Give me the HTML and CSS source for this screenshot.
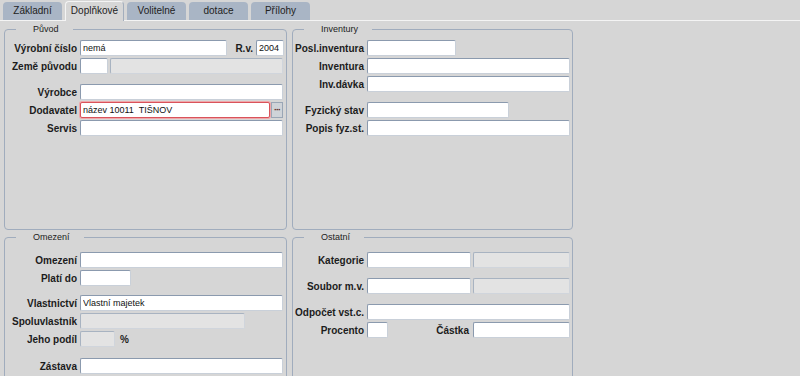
FILE: index.html
```html
<!DOCTYPE html>
<html lang="cs">
<head>
    <meta charset="UTF-8">
    <title>Doplňkové</title>
    <link rel="stylesheet" href="styles.css">
</head>
<body>
    <div class="tabbar">
        <div class="tab">Základní</div>
        <div class="tab active">Doplňkové</div>
        <div class="tab">Volitelné</div>
        <div class="tab">dotace</div>
        <div class="tab">Přílohy</div>
    </div>

    <div class="panels">
        <!-- Původ -->
        <fieldset class="box top left">
            <legend>Původ</legend>
            <div class="row">
                <label class="lbl">Výrobní číslo</label>
                <input class="fld w147" value="nemá">
                <label class="lbl-inline push">R.v.</label>
                <input class="fld w28" value="2004">
            </div>
            <div class="row">
                <label class="lbl">Země původu</label>
                <input class="fld w28">
                <input class="fld off w173" disabled>
            </div>
            <div class="spacer"></div>
            <div class="row">
                <label class="lbl">Výrobce</label>
                <input class="fld full">
            </div>
            <div class="row">
                <label class="lbl">Dodavatel</label>
                <input class="fld w190 invalid" value="název 10011  TIŠNOV">
                <button class="pick">···</button>
            </div>
            <div class="row">
                <label class="lbl">Servis</label>
                <input class="fld full">
            </div>
        </fieldset>

        <!-- Inventury -->
        <fieldset class="box top right">
            <legend>Inventury</legend>
            <div class="row">
                <label class="lbl">Posl.inventura</label>
                <input class="fld w89">
            </div>
            <div class="row">
                <label class="lbl">Inventura</label>
                <input class="fld full">
            </div>
            <div class="row">
                <label class="lbl">Inv.dávka</label>
                <input class="fld full">
            </div>
            <div class="spacer"></div>
            <div class="row">
                <label class="lbl">Fyzický stav</label>
                <input class="fld w142">
            </div>
            <div class="row">
                <label class="lbl">Popis fyz.st.</label>
                <input class="fld full">
            </div>
        </fieldset>

        <!-- Omezení -->
        <fieldset class="box bottom left">
            <legend>Omezení</legend>
            <div class="row">
                <label class="lbl">Omezení</label>
                <input class="fld full">
            </div>
            <div class="row">
                <label class="lbl">Platí do</label>
                <input class="fld w51">
            </div>
            <div class="spacer s7"></div>
            <div class="row">
                <label class="lbl">Vlastnictví</label>
                <input class="fld full" value="Vlastní majetek">
            </div>
            <div class="row">
                <label class="lbl">Spoluvlastník</label>
                <input class="fld off w165" disabled>
            </div>
            <div class="row">
                <label class="lbl">Jeho podíl</label>
                <input class="fld off w35" disabled>
                <span class="unit">%</span>
            </div>
            <div class="spacer s9"></div>
            <div class="row">
                <label class="lbl">Zástava</label>
                <input class="fld full">
            </div>
        </fieldset>

        <!-- Ostatní -->
        <fieldset class="box bottom right">
            <legend>Ostatní</legend>
            <div class="row">
                <label class="lbl">Kategorie</label>
                <input class="fld w104">
                <input class="fld off w97" disabled>
            </div>
            <div class="spacer"></div>
            <div class="row">
                <label class="lbl">Soubor m.v.</label>
                <input class="fld w104">
                <input class="fld off w97" disabled>
            </div>
            <div class="spacer"></div>
            <div class="row">
                <label class="lbl">Odpočet vst.c.</label>
                <input class="fld full">
            </div>
            <div class="row">
                <label class="lbl">Procento</label>
                <input class="fld w21">
                <label class="lbl-inline push">Částka</label>
                <input class="fld w97">
            </div>
        </fieldset>
    </div>
</body>
</html>
```

FILE: styles.css
```css
body {
    margin: 0;
    background: #d6d6d6;
    font-family: "Liberation Sans", Arial, sans-serif;
    color: #1c1c1c;
    overflow: hidden;
}
.tabbar {
    display: flex;
    align-items: flex-end;
    gap: 3px;
    height: 20px;
    padding-left: 3px;
    border-bottom: 1px solid #f4f4f4;
}
.tab {
    box-sizing: border-box;
    width: 59px;
    height: 18px;
    background: #a9b5c5;
    border-radius: 4px 4px 0 0;
    text-align: center;
    font-size: 10px;
    line-height: 18px;
    color: #222;
}
.tab.active {
    height: 20px;
    margin-bottom: -1px;
    background: #d6d6d6;
    border: 1px solid #f4f4f4;
    border-right-color: #a3aebd;
    border-bottom: none;
    line-height: 17px;
}
.panels {
    display: grid;
    grid-template-columns: 283px 281px;
    grid-template-rows: 207px 160px;
    column-gap: 5px;
    row-gap: 1px;
    padding: 2px 0 0 4px;
}
.box {
    margin: 0;
    padding: 5px 2px 0 0;
    border: 1px solid #a0acbd;
    border-radius: 4px;
    min-width: 0;
}
.box.bottom {
    padding-top: 9px;
}
.box legend {
    margin-left: 11px;
    padding: 0 14px 0 17px;
    font-size: 9px;
    line-height: 12px;
    color: #222;
}
.row {
    display: flex;
    align-items: center;
    height: 16px;
    margin-bottom: 2px;
}
.spacer {
    height: 8px;
}
.spacer.s7 {
    height: 7px;
}
.spacer.s9 {
    height: 9px;
}
.lbl {
    flex: none;
    width: 72px;
    margin-right: 3px;
    text-align: right;
    font-weight: bold;
    font-size: 10px;
    white-space: nowrap;
}
.box.right .lbl {
    width: 71px;
}
.lbl-inline {
    font-weight: bold;
    font-size: 10px;
    margin-right: 3px;
}
.push {
    margin-left: auto;
}
.box.right .lbl-inline {
    margin-right: 4px;
}
.fld {
    box-sizing: border-box;
    flex: none;
    height: 16px;
    margin: 0 2px 0 0;
    padding: 0 2px;
    background: #fff;
    border: 1px solid;
    border-color: #8b9aae #c9d0d9 #c9d0d9 #8b9aae;
    border-radius: 2px;
    font-family: "Liberation Sans", Arial, sans-serif;
    font-size: 9px;
    color: #111;
    outline: none;
}
.fld.off {
    background: #e3e3e3;
    border-color: #a8b3c1 #d0d5dc #d0d5dc #a8b3c1;
}
.fld.invalid {
    border: 1px solid #d9535a;
    box-shadow: 0 0 0 1px #f0a7aa;
    margin-right: 1px;
}
.row .fld:last-child {
    margin-right: 0;
}
.full { width: 203px; }
.w21 { width: 21px; }
.w28 { width: 28px; }
.w35 { width: 35px; }
.w51 { width: 51px; }
.w89 { width: 89px; }
.w97 { width: 97px; }
.w104 { width: 104px; }
.w142 { width: 142px; }
.w147 { width: 147px; }
.w165 { width: 165px; }
.w173 { width: 173px; }
.w190 { width: 190px; }
.pick {
    box-sizing: border-box;
    width: 12px;
    height: 16px;
    padding: 0;
    background: #cfd3d8;
    border: 1px solid #9aa6b5;
    color: #5a1c1c;
    font-size: 9px;
    font-weight: bold;
    line-height: 12px;
    letter-spacing: -1px;
}
.unit {
    margin-left: 3px;
    font-weight: bold;
    font-size: 10px;
    padding-top: 1px;
}
```
